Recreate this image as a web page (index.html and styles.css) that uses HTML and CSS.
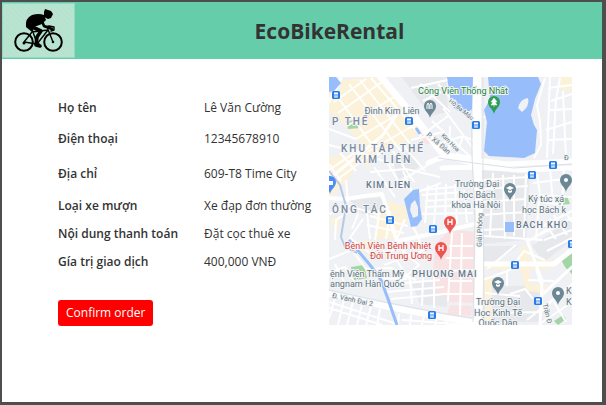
FILE: index.html
```html
<!DOCTYPE html>
<html lang="vi">
<head>
<meta charset="utf-8">
<title>EcoBikeRental</title>
<link rel="stylesheet" href="styles.css">
</head>
<body>
<div class="window">
  <header class="header">
    <a class="logo" href="#" aria-label="EcoBikeRental">
      <svg class="cyclist" viewBox="0 0 50 44" aria-hidden="true">
        <g fill="none" stroke="#000" stroke-linecap="round" stroke-linejoin="round">
          <circle cx="10" cy="33" r="8.8" stroke-width="2"/>
          <circle cx="39" cy="33" r="8.8" stroke-width="2"/>
          <path d="M10 33 18 23 34 21 23 35Z M18 20 23 35 M33 18 39 33 M31 18 35 17 40 18 40 21 37 22" stroke-width="1.4"/>
          <circle cx="23" cy="35" r="2"/>
          <path d="M16 17 27 22 23 28 22 36 26 37" stroke-width="3.6"/>
          <path d="M28 12 30 17 38 20" stroke-width="2.6"/>
        </g>
        <path d="M12 18Q11 9 18 6Q25 4 30 6L32 11 28 15 20 18 18 23Z"/>
        <path d="M30 3 31 0 37 2 39 5 37 9 34 10 30 8Z"/>
        <circle cx="10" cy="34" r="1.5"/><circle cx="39" cy="33" r="1.3"/>
      </svg>
    </a>
    <h1 class="title">EcoBikeRental</h1>
  </header>
  <main class="content">
    <section class="order">
      <dl class="details">
        <dt>Họ tên</dt><dd>Lê Văn Cường</dd>
        <dt>Điện thoại</dt><dd>12345678910</dd>
        <dt>Địa chỉ</dt><dd>609-T8 Time City</dd>
        <dt>Loại xe mượn</dt><dd>Xe đạp đơn thường</dd>
        <dt>Nội dung thanh toán</dt><dd>Đặt cọc thuê xe</dd>
        <dt>Gía trị giao dịch</dt><dd>400,000 VNĐ</dd>
      </dl>
      <button class="confirm" type="button">Confirm order</button>
    </section>
    <svg class="map" viewBox="329 77 243 248" role="img" aria-label="Kim Liên">
      <defs>
        <g id="bus"><rect x="-4" y="-4" width="8" height="8" rx="1.5" fill="#287de9"/><rect x="-2" y="-2.5" width="4" height="4" fill="#fff"/><path d="M-2 0H2M-1.500 2.500V1.500M1.500 2.500V1.500" stroke="#287de9" fill="none"/><path d="M-2 2H2" stroke="#fff"/></g>
        <path id="pin" d="M0 10C-1 5-6 3-6-2A6 6 0 0 1 6-2C6 3 1 5 0 10Z"/>
        <g id="school"><use href="#pin" fill="#6c8795"/><path d="M-4-3 0-5 4-3 0-1ZM-2-1V1L0 2 2 1V-1L0 0Z" fill="#fff"/></g>
        <g id="place"><use href="#pin" fill="#6c8795"/><circle cy="-2" r="2" fill="#fff"/></g>
        <g id="hospital"><use href="#pin" fill="#ed5650"/><path d="M-2-5V1M2-5V1M-2-2H2" stroke="#fff" stroke-width="1.300"/></g>
      </defs>
      <rect x="329" y="77" width="243" height="248" fill="#eff1f4"/>
      <g fill="#e6e8ec">
        <path d="M482 170 530 174 526 240 482 244ZM392 157 412 152 420 166 398 180ZM350 200 384 197 390 216 362 214ZM490 287 540 285 543 322 487 322ZM402 77 446 77 448 112 430 116ZM532 246 572 218 572 240 544 262ZM412 284 445 276 447 307 420 304ZM483 246 519 246 495 262 483 262Z"/>
      </g>
      <g fill="#fcf1d9">
        <path d="M341 80 380 77 407 107 422 130 403 144 373 157 340 120 329 112V94L341 91ZM329 157 349 155 358 165 345 183 329 198ZM386 200 407 207 406 224 384 233 373 216ZM378 220 403 219 399 239 374 239ZM349 242 378 240 371 252 355 253ZM329 219 341 217 337 232ZM520 246 531 250 529 260 554 260 551 269 529 270 531 284 547 285 544 293 526 291 521 270 483 269 484 263 520 261ZM558 77 572 77V89L563 93ZM483 277 492 276 492 325H484ZM349 155 365 150 377 158 368 167Z"/>
      </g>
      <g fill="#f9e2e3">
        <path d="M436 244 450 229 474 232 474 303 450 302 432 285 434 259ZM420 136 432 133 438 143 426 144ZM450 305 472 306 471 316 447 314Z"/>
      </g>
      <g fill="#a3d5a5">
        <path d="M346 121 358 120 360 128 348 129ZM351 267 364 265 367 278 352 281ZM560 258 572 252V274L565 267ZM554 321 563 315 566 319 558 325ZM558 198 567 196 570 204 559 205Z"/>
      </g>
      <g fill="none" stroke="#fff" stroke-width="2">
        <path d="M334 102 366 79M338 113 382 82M347 126 397 95M356 139 408 108M367 152 420 122M349 84 401 151M360 80 412 146M337 96 378 153M371 78 421 136M329 129 356 139M329 145 374 157 397 144"/>
        <path d="M329 170 357 151 394 165M329 186 370 155M341 181 329 164M356 171 340 153M384 157 399 182 428 165M393 151 414 182M403 145 425 171M374 167 395 197M370 172 406 169 440 177M411 140 443 132M403 171 413 194 441 183"/>
        <path d="M329 214 349 206 380 215M335 240 336 220 350 211M352 229 358 214M366 204 370 239M380 208 375 240M390 211 386 239M405 219 397 239M370 216 408 226M367 225 404 233M409 219 418 236 423 255M348 202 346 180M363 219 350 238 370 253"/>
        <path d="M421 190 454 187M422 195 462 192M425 201 470 198M425 207 472 205M422 214 473 213M428 185 425 223M437 184 434 224M446 184 445 226M455 184 457 224M464 190 467 223"/>
        <path d="M329 259 352 250 366 269 391 268 416 280M329 272 345 267 357 286M335 264 344 282M377 253 401 249 419 265 399 282M384 265 424 250M395 258 409 279M376 278 407 279M380 285 440 280M385 292 444 287M391 299 445 294M410 277 412 304M423 276 422 306M434 273 434 308"/>
        <path d="M329 302 397 324M329 308 382 325M335 298 329 319M344 300 338 325M353 302 347 325M362 305 357 325M371 307 366 325M380 309 377 325M399 314 398 325M411 315 410 325M424 316 422 325M437 318 435 325M447 319 446 325M402 320 470 325"/>
        <path d="M438 84 468 117M420 84 450 112M411 88 452 79M423 101 441 92M443 108 475 151M432 121 473 159M439 144 463 136 475 141M449 158 450 126M455 161 463 136M429 130 448 116"/>
        <path d="M545 78 537 105 540 121 541 145 534 158M550 77 547 158M560 78 556 99 553 154M572 94 551 101M572 109 550 110M572 122 546 130M572 139 548 140M563 91 566 158M548 88 572 85M482 117 497 116"/>
        <path d="M482 180 529 177M482 189 528 186M482 202 525 199M482 215 526 212M482 230 523 228M493 173 490 236M503 175 505 239M514 175 514 236M526 174 524 237M537 174 541 202 558 204M533 183 572 178M531 195 572 197M550 168 553 203M564 168 562 207M484 236 543 240M539 201 536 239"/>
        <path d="M537 229 572 211M539 235 572 218M529 241 553 225 550 219M544 240 572 230M547 251 572 238M542 220 556 239M554 215 567 235M565 211 572 222M487 269 516 245M483 280 510 270 524 251 545 260M536 269 543 291M528 280 554 281M485 293 520 296M507 271 507 286M510 294 525 289 533 299M495 313 540 312 562 292M527 320 572 284M541 323 572 302M554 302 566 322"/>
        <path d="M449 246 473 246M446 258 473 258M441 271 474 270M448 281 472 281M442 294 474 294M452 232 448 301M462 233 460 315"/>
      </g>
      <g fill="none" stroke="#fff" stroke-linecap="round" stroke-linejoin="round">
        <path d="M329 179 382 136 400 110M341 78 329 102" stroke-width="3"/>
        <path d="M329 198Q348 200 364 196L382 194 397 241 432 234 475 224" stroke-width="4"/>
        <path d="M380 76 416 119 443 154 482 165" stroke-width="7"/>
        <path d="M428 163Q450 151 476 160L507 164 572 161M442 168Q480 166 520 170L572 168" stroke-width="5"/>
        <path d="M477 77 477 160 480 218 478 325" stroke-width="8"/>
        <path d="M329 294 389 307 446 318 477 323 492 325" stroke-width="6"/>
        <path d="M479 264H554L572 250" stroke-width="5"/>
        <path d="M527 240 542 281 540 325M543 294 572 267" stroke-width="3"/>
      </g>
      <g fill="none" stroke="#dce0e7" stroke-width="1">
        <path d="M471 77 472 156 475 218 473 322M483 77 483 160 484 325M329 290 389 303 446 314 472 318M438 158 474 163 514 168 572 164"/>
      </g>
      <g fill="none" stroke="#98bdfb" stroke-linejoin="round">
        <path d="M329 171 340 185 346 206 341 237 345 247 357 253" stroke="#b6c9e7" stroke-width="2"/>
        <path d="M349 240 370 265 381 280 388 299 397 325" stroke-width="3"/>
        <path d="M416 128 420 134" stroke-width="3"/>
      </g>
      <g fill="#98bdfb">
        <path d="M329 77H336L341 83 334 91 329 92ZM447 77H473L472 109 465 115 454 108 450 97ZM488 77H538L541 84 535 99 531 115 534 125 537 130 535 153 524 158 489 156 484 151 487 122 484 110 490 99ZM505 222H514V232H505Z"/>
        <path fill-rule="evenodd" d="M404 199 413 190 419 189 420 206 422 219 417 226 411 227ZM411 204 410 210 413 218 418 216 418 207 415 200Z"/>
      </g>
      <g fill="#eff1f4">
        <path d="M518 108Q520 99 528 98Q530 106 522 112 519 112ZM492 113 499 108 502 118 497 121 492 119ZM498 157 500 149 504 148 506 156Z"/>
      </g>
      <g class="labels">
        <g class="district">
          <text x="332" y="125">P THỂ</text><text x="341" y="152">KHU TẬP THỂ</text><text x="355" y="163">KIM LIÊN</text><text x="332" y="213">ÔNG TÁC</text>
          <text class="tight" x="366" y="188">KIM LIEN</text><text class="tight" x="412" y="277">PHUONG MAI</text><text class="tight" x="516" y="228">BACH KHO</text>
        </g>
        <text x="463" y="94" fill="#258342">Công Viên Thống Nhất</text>
        <text x="392" y="114">Đình Kim Liên</text>
        <text x="477" y="187">Trường Đại</text><text x="477" y="198">học Bách</text><text x="476" y="208">khoa Hà Nội</text>
        <g class="from-left">
          <text x="528" y="202">Ký túc xá</text><text x="522" y="213">học Bách k</text>
          <text x="330" y="277">ệnh Viện Thẩm Mỹ</text><text x="330" y="287">angnam Hàn Quốc</text>
          <text x="566" y="294">K</text><text x="566" y="305">K</text>
        </g>
        <g fill="#d83f3b"><text x="388" y="249">Bệnh Viện Bệnh Nhiệt</text><text x="401" y="259">Đới Trung Ương</text></g>
        <text x="498" y="305">Trường Đại</text><text x="498" y="316">Học Kinh Tế</text><text x="498" y="326">Quốc Dân</text>
        <g class="street">
          <text class="from-left" x="564" y="160">Đ</text>
          <text transform="translate(437 145) rotate(41)">P. Xã Đàn</text><text transform="translate(352 302) rotate(12)">Đ. Vành Đai 2</text><text transform="translate(482 230) rotate(-88)">Giải Phóng</text>
          <text class="minor" transform="translate(449 144) rotate(45)">Kim Hoa</text><text class="minor" transform="translate(460 111) rotate(39)">Hồ Ba Mẫu</text><text transform="translate(545 314) rotate(76)">Trần Đ</text>
        </g>
      </g>
      <use href="#bus" x="336" y="95"/><use href="#bus" x="409" y="121"/><use href="#bus" x="476" y="125"/><use href="#bus" x="390" y="220"/><use href="#bus" x="433" y="229"/><use href="#bus" x="553" y="165"/><use href="#bus" x="532" y="175"/><use href="#bus" x="515" y="265"/><use href="#bus" x="538" y="301"/><use href="#bus" x="432" y="315"/><use href="#bus" x="572" y="244"/>
      <use href="#school" x="510" y="191"/><use href="#school" x="498" y="285"/><use href="#place" x="566" y="182"/><use href="#place" x="558" y="295"/>
      <g transform="translate(430 108)"><use href="#pin" fill="#6c8795"/><path d="M-3 1V-3L-2-5-1-3V1M0 1V-4L1-5 2-3V1" stroke="#fff" fill="none"/></g>
      <g transform="translate(494 104)"><use href="#pin" fill="#2c9f50"/><path d="M0-6 3-2H1L3 1H-3L-1-2H-3ZM0 0V3" fill="#fff" stroke="#fff" stroke-width=".5"/></g>
      <use href="#hospital" x="450" y="224"/><use href="#hospital" x="441" y="250"/>
      <g transform="translate(330 184)"><use href="#pin" fill="#4c8df6"/><path d="M-3-3H3V1H-3Z" fill="#fff"/></g>
    </svg>
  </main>
</div>
</body>
</html>
```

FILE: styles.css
```css
* { box-sizing: border-box; }
body {
  margin: 0;
  background: #4d4f4e;
  color: #333;
  font: 12px/16px "Open Sans", "Noto Sans", sans-serif;
}
.window {
  display: flex;
  flex-direction: column;
  min-height: 100vh;
  border: solid #4d4f4e;
  border-width: 2px 4px 3px 2px;
  background: #fff;
}
.header {
  display: grid;
  grid-template-columns: 73px 1fr 73px;
  align-items: center;
  height: 57px;
  background: #66cdaa;
}
.logo {
  display: grid;
  place-items: center;
  height: 55px;
  border: 1px solid #91dbc2;
  background: repeating-linear-gradient(45deg, #b5e3cf 0 2px, #bae3d0 2px 4px);
}
.cyclist { width: 50px; height: 44px; }
.title {
  margin: 0;
  padding-left: 55px;
  text-align: center;
  font-size: 21px;
  font-weight: bold;
  line-height: 30px;
}
.content {
  display: flex;
  align-items: flex-start;
  padding: 18px 30px 18px 56px;
}
.order { flex: 1; padding-top: 16px; }
.details {
  display: grid;
  grid-template-columns: 146px 1fr;
  grid-template-rows: 30px 32px 38px 26px 30px 26px;
  align-items: center;
  margin: 0 0 25px;
}
.details dt { font-weight: 600; }
.details dd { margin: 0; white-space: nowrap; }
.confirm {
  height: 26px;
  padding: 0 8px;
  border: 0;
  border-radius: 3px;
  background: #f00;
  color: #fff;
  font: inherit;
}
.map { flex: 0 0 243px; height: 248px; }
.labels {
  fill: #60747f;
  font-family: Roboto, sans-serif;
  font-size: 9px;
  text-anchor: middle;
}
.labels text { paint-order: stroke; stroke: #f4f5f6; stroke-width: 2px; stroke-linejoin: round; }
.labels .from-left { text-anchor: start; }
.labels .street { font-size: 7px; }
.labels .minor { font-size: 6px; }
.labels .district {
  fill: #7b8b9f;
  font-size: 10px;
  font-weight: 500;
  letter-spacing: 2px;
  text-anchor: start;
}
.labels .tight { fill: #66788a; font-size: 9px; letter-spacing: 1px; }
```
